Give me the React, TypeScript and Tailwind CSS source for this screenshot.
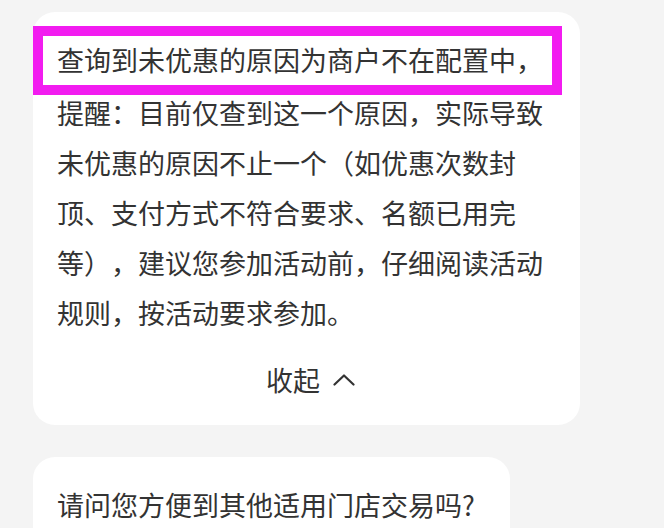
import React from 'react';

const font = { fontFamily: '"Noto Sans CJK SC", "Noto Sans", sans-serif' };

const lines = [
  '提醒：目前仅查到这一个原因，实际导致',
  '未优惠的原因不止一个（如优惠次数封',
  '顶、支付方式不符合要求、名额已用完',
  '等），建议您参加活动前，仔细阅读活动',
  '规则，按活动要求参加。',
];

export default function App() {
  return (
    <div
      className="h-[528px] w-[664px] overflow-hidden bg-[#f4f4f4] pt-[12px] pl-[33px] text-[#333333] [text-spacing-trim:space-all]"
      style={font}
    >
      <div className="w-[547px] rounded-[22px] bg-white pt-[14px] pb-[25px]">
        <div className="flex h-[69px] w-[529px] items-center border-[10px] border-[#f21cf0] pl-[14px] text-[27px] whitespace-nowrap">
          查询到未优惠的原因为商户不在配置中，
        </div>
        <div className="-mt-[7px] px-[24px] text-[27px] leading-[50px]">
          {lines.map((l) => (
            <div key={l} className="whitespace-nowrap">
              {l}
            </div>
          ))}
        </div>
        <div className="mt-[22px] flex items-center justify-center gap-[13px] pl-[8px] text-[27px] leading-[40px]">
          <span>收起</span>
          <svg width="22" height="12" viewBox="0 0 22 12" fill="none">
            <path d="M1.5 10.5 L11 1.5 L20.5 10.5" stroke="#333333" strokeWidth="2.2" strokeLinecap="round" strokeLinejoin="round" />
          </svg>
        </div>
      </div>
      <div className="mt-[32px] w-[477px] rounded-[22px] bg-white px-[24px] pt-[28px] pb-[30px] text-[27px] leading-[40px] whitespace-nowrap">
        请问您方便到其他适用门店交易吗?
      </div>
    </div>
  );
}
